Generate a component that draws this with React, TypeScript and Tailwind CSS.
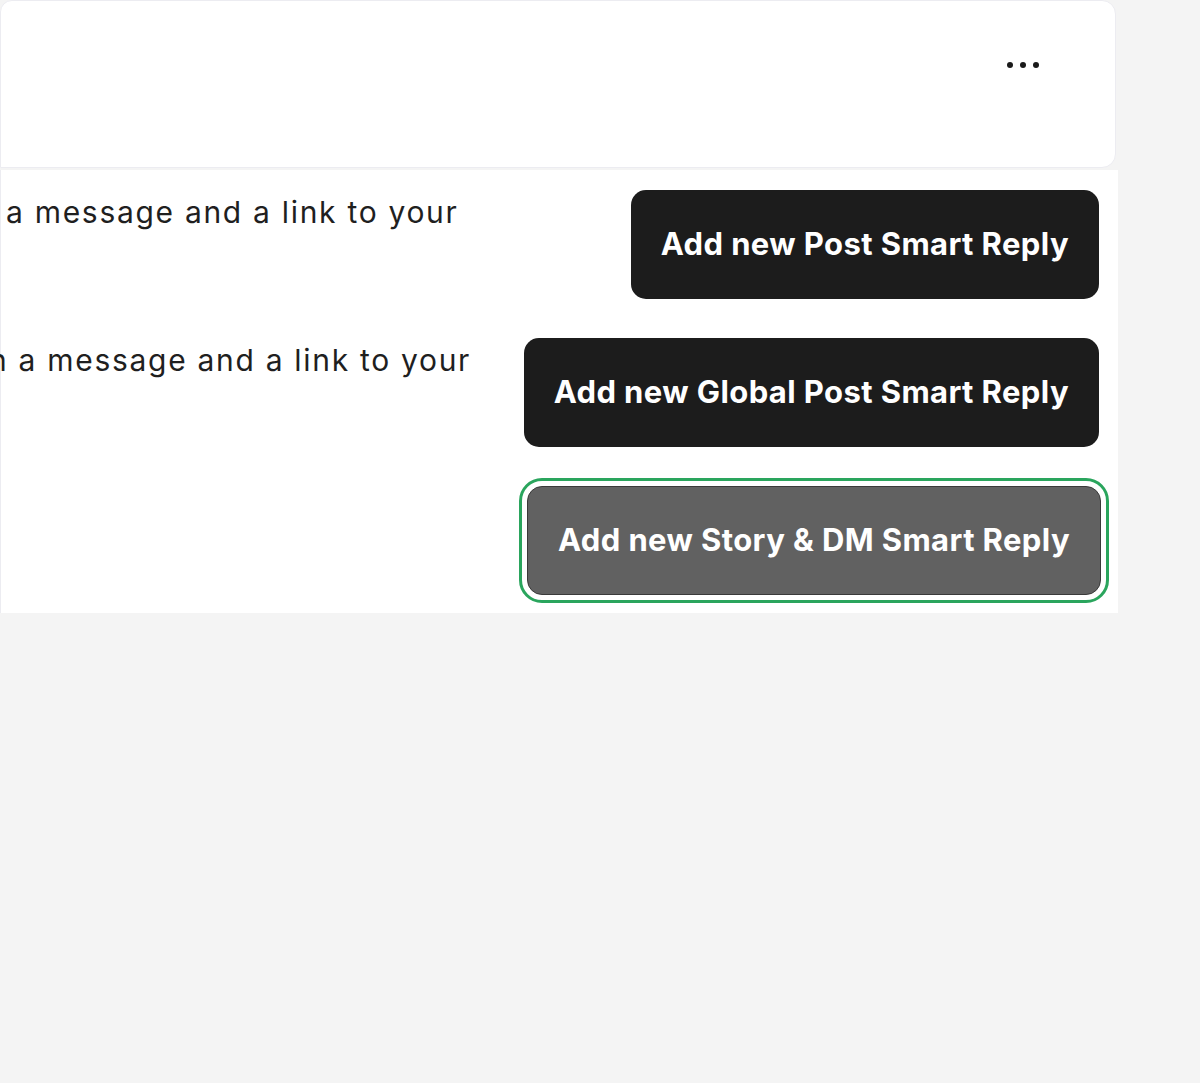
import React from "react";

const btnBase =
  "h-[109px] rounded-[15px] px-[30px] flex items-center justify-center whitespace-nowrap text-white text-[31px] font-bold tracking-[0.4px] shrink-0";

const bodyText =
  "text-[30px] leading-[44px] tracking-[1.7px] text-[#1f1f1f] whitespace-nowrap";

export default function App() {
  return (
    <div
      className="w-[1200px] min-h-[1083px] bg-[#f4f4f4] overflow-hidden"
      style={{ fontFamily: "Inter, 'Noto Sans', sans-serif" }}
    >
      <div className="w-[1118px]">
        <div className="h-[168px] bg-white border border-[#ececf1] rounded-tl-[12px] rounded-r-[14px] mr-[2px] flex justify-end items-start pt-[61px] pr-[76px]">
          <div className="flex gap-[7px]">
            <span className="w-[6px] h-[6px] rounded-full bg-[#1a1a1a]" />
            <span className="w-[6px] h-[6px] rounded-full bg-[#1a1a1a]" />
            <span className="w-[6px] h-[6px] rounded-full bg-[#1a1a1a]" />
          </div>
        </div>
        <div className="mt-[2px] bg-white border-l border-[#ececf1] pt-[20px] pb-[18px] pr-[19px] flex flex-col gap-[39px]">
          <div className="flex justify-between items-start">
            <div className={"pl-[5px] " + bodyText}>a message and a link to your</div>
            <button className={btnBase + " bg-[#1c1c1c]"}>Add new Post Smart Reply</button>
          </div>
          <div className="flex justify-between items-start">
            <div className={"-ml-[12px] " + bodyText}>n a message and a link to your</div>
            <button className={btnBase + " bg-[#1c1c1c]"}>Add new Global Post Smart Reply</button>
          </div>
          <div className="flex justify-end items-start">
            <button
              className={
                btnBase +
                " bg-[#616161] border-[1.5px] border-[#3a3a3a] -mr-[2px] outline-solid outline-3 outline-[#2aa55d] outline-offset-[5px]"
              }
            >
              Add new Story &amp; DM Smart Reply
            </button>
          </div>
        </div>
      </div>
    </div>
  );
}
